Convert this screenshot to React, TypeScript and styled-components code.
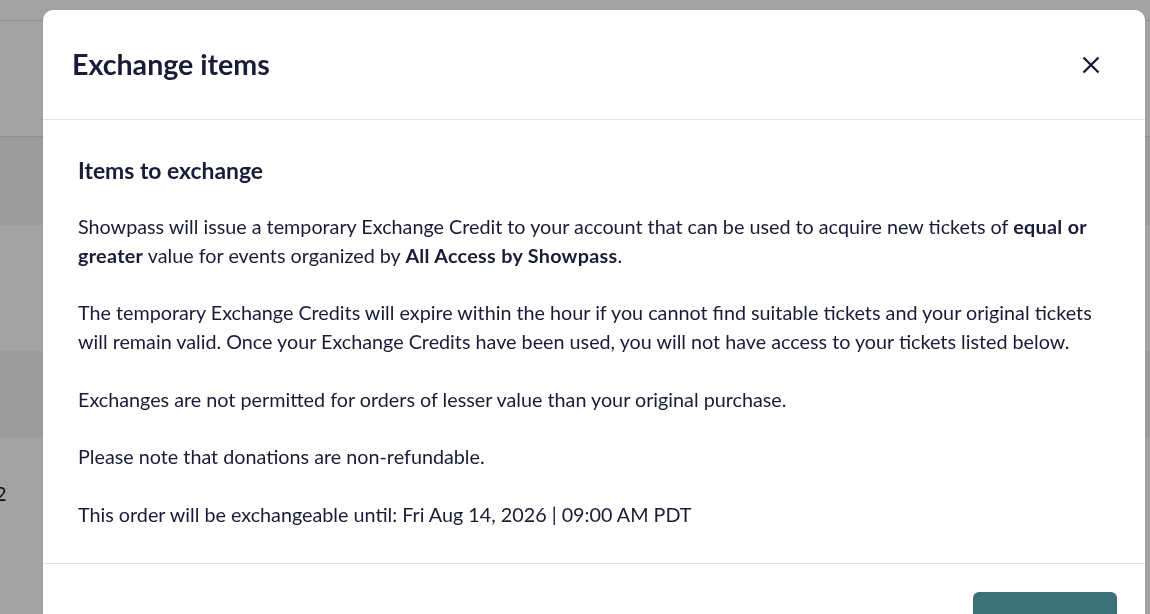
import React from "react";
import styled, { createGlobalStyle } from "styled-components";

const Global = createGlobalStyle`
  html, body { margin: 0; padding: 0; }
  body {
    width: 1150px;
    height: 614px;
    overflow: hidden;
    font-family: Lato, "Noto Sans", sans-serif;
    background: #ffffff;
  }
`;

const Page = styled.div`
  display: flex;
  flex-direction: column;
  height: 614px;
  background: #ffffff;
`;

const PageRow = styled.div<{ $h: number; $bg: string; $line?: boolean }>`
  height: ${(p) => p.$h}px;
  background: ${(p) => p.$bg};
  border-bottom: ${(p) => (p.$line ? "1px solid #dcdcdc" : "none")};
  display: flex;
  align-items: center;
  flex-shrink: 0;
`;

const CutText = styled.span`
  font-size: 19.7px;
  color: #1c1d3a;
  margin-left: -5px;
`;

const Overlay = styled.div`
  position: fixed;
  inset: 0;
  background: rgba(0, 0, 0, 0.36);
  display: flex;
  align-items: flex-start;
  padding: 10px 0 0 43px;
`;

const Modal = styled.div`
  width: 1102px;
  background: #ffffff;
  border-radius: 10px 10px 0 0;
  display: flex;
  flex-direction: column;
  color: #1c1d3a;
`;

const Header = styled.div`
  height: 109px;
  display: flex;
  align-items: center;
  justify-content: space-between;
  padding: 0 44px 0 29px;
  border-bottom: 1px solid #e2e2e2;
`;

const Title = styled.h2`
  margin: 0;
  font-size: 28.6px;
  font-weight: 700;
  color: #1a1b36;
  transform: translateY(-1px);
`;

const CloseButton = styled.button`
  border: none;
  background: none;
  padding: 0;
  width: 20px;
  height: 20px;
  display: flex;
  align-items: center;
  justify-content: center;
  cursor: pointer;
`;

const Body = styled.div`
  padding: 36px 35px 5px 35px;
  border-bottom: 1px solid #e2e2e2;
`;

const SectionTitle = styled.h3`
  margin: 0 0 29px 0;
  font-size: 22.9px;
  line-height: 28px;
  font-weight: 700;
  color: #1a1b36;
`;

const Para = styled.p`
  margin: 0 0 28.7px 0;
  font-size: 19.75px;
  line-height: 28.8px;
  color: #1a1b36;
`;

const Strong = styled.strong`
  font-weight: 700;
  letter-spacing: 0.3px;
`;

const Footer = styled.div`
  display: flex;
  justify-content: flex-end;
  padding: 28px 28px 28px;
`;

const PrimaryButton = styled.button`
  width: 144px;
  height: 62px;
  border: none;
  border-radius: 6px;
  background: #3d7178;
  color: #ffffff;
  font-family: Lato, sans-serif;
  font-size: 19px;
  font-weight: 700;
`;

export default function App() {
  return (
    <>
      <Global />
      <Page>
        <PageRow $h={20} $bg="#ffffff" $line />
        <PageRow $h={115} $bg="#ffffff" $line />
        <PageRow $h={88} $bg="#f2f2f2" />
        <PageRow $h={126} $bg="#ffffff" />
        <PageRow $h={86} $bg="#f2f2f2" />
        <PageRow $h={112} $bg="#ffffff">
          <CutText>2</CutText>
        </PageRow>
      </Page>
      <Overlay>
        <Modal>
          <Header>
            <Title>Exchange items</Title>
            <CloseButton aria-label="Close">
              <svg width="18" height="18" viewBox="0 0 18 18" fill="none">
                <path
                  d="M1.5 1.5 L16.5 16.5 M16.5 1.5 L1.5 16.5"
                  stroke="#1a1b36"
                  strokeWidth="2.4"
                  strokeLinecap="butt"
                />
              </svg>
            </CloseButton>
          </Header>
          <Body>
            <SectionTitle>Items to exchange</SectionTitle>
            <Para>
              Showpass will issue a temporary Exchange Credit to your account that can be used to acquire new
              tickets of <Strong>equal or greater</Strong> value for events organized by{" "}
              <Strong>All Access by Showpass</Strong>.
            </Para>
            <Para>
              The temporary Exchange Credits will expire within the hour if you cannot find suitable tickets and
              your original tickets will remain valid. Once your Exchange Credits have been used, you will not have
              access to your tickets listed below.
            </Para>
            <Para>Exchanges are not permitted for orders of lesser value than your original purchase.</Para>
            <Para>Please note that donations are non-refundable.</Para>
            <Para>This order will be exchangeable until: Fri Aug 14, 2026 | 09:00 AM PDT</Para>
          </Body>
          <Footer>
            <PrimaryButton>Continue</PrimaryButton>
          </Footer>
        </Modal>
      </Overlay>
    </>
  );
}
